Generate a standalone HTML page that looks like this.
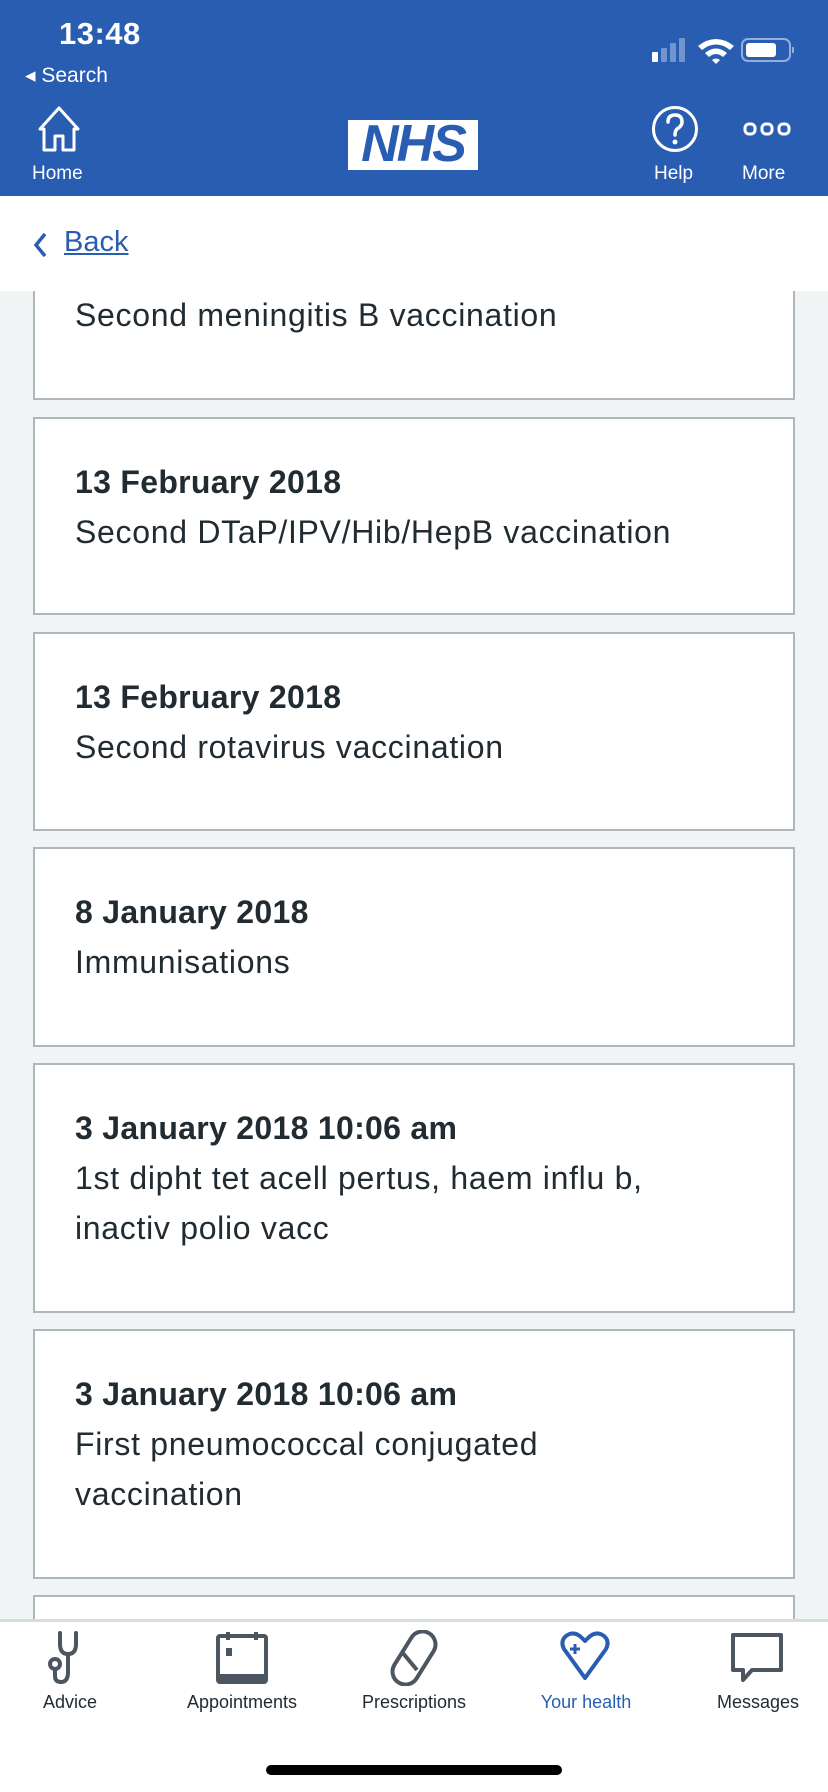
<!DOCTYPE html>
<html><head><meta charset="utf-8"><style>
*{margin:0;padding:0;box-sizing:border-box}
body{width:828px;height:1792px;position:relative;overflow:hidden;background:#f0f4f5;font-family:"Liberation Sans",sans-serif;color:#212b32}
.a{position:absolute}
.hdr{left:0;top:0;width:828px;height:196px;background:#285db2;color:#fff}
.card{position:absolute;left:33px;width:762px;background:#fff;border:2px solid #aeb7bd}
.card .t{position:absolute;left:40px;font-size:32px;line-height:50px;white-space:nowrap;letter-spacing:0.7px}
.card b{font-weight:bold;letter-spacing:0.3px}
.tab{position:absolute;top:1692px;font-size:18px;transform:translateX(-50%);white-space:nowrap;color:#212b32}
</style></head><body>
<div class="a hdr">
  <div class="a" style="left:59px;top:16px;font-size:31px;font-weight:bold;letter-spacing:0.5px">13:48</div>
  <div class="a" style="left:25px;top:63px;font-size:21px">◂ Search</div>
  <svg class="a" style="left:650px;top:36px" width="146" height="28" viewBox="0 0 146 28">
    <rect x="2" y="16" width="6" height="10" rx="1" fill="#fff"/>
    <rect x="11" y="12" width="6" height="14" rx="1" fill="#fff" opacity=".35"/>
    <rect x="20" y="7" width="6" height="19" rx="1" fill="#fff" opacity=".35"/>
    <rect x="29" y="2" width="6" height="24" rx="1" fill="#fff" opacity=".35"/>
    <path d="M48 10 Q66 -4 84 10 L80 14 Q66 3 52 14Z M55 17 Q66 8 77 17 L73 21 Q66 15 59 21Z M62 24 L66 28 L70 24 Q66 21 62 24Z" fill="#fff"/>
    <rect x="92" y="3" width="48" height="22" rx="6" fill="none" stroke="#fff" stroke-opacity=".5" stroke-width="2"/>
    <rect x="96" y="7" width="30" height="14" rx="3" fill="#fff"/>
    <path d="M143 11 v6" stroke="#fff" stroke-opacity=".5" stroke-width="2"/>
  </svg>
  <svg class="a" style="left:35px;top:105px" width="48" height="48" viewBox="0 0 48 48">
    <path d="M24 3 L43 24 L39 24 L39 45 L28 45 L28 31 L20 31 L20 45 L9 45 L9 24 L5 24 Z" fill="none" stroke="#fff" stroke-width="3" stroke-linejoin="round"/>
  </svg>
  <div class="a" style="left:32px;top:163px;font-size:19px">Home</div>
  <div class="a" style="left:348px;top:120px;width:130px;height:50px;background:#fff"></div>
  <div class="a" style="left:348px;top:114px;width:130px;text-align:center;font-size:52px;font-weight:bold;font-style:italic;color:#285db2;letter-spacing:-2px;line-height:60px">NHS</div>
  <svg class="a" style="left:651px;top:105px" width="48" height="48" viewBox="0 0 48 48">
    <circle cx="24" cy="24" r="21.5" fill="none" stroke="#fff" stroke-width="3"/>
    <path d="M17 17 Q17 10 24 10 Q31 10 31 17 Q31 21 26 24 Q24 26 24 30" fill="none" stroke="#fff" stroke-width="3.5" stroke-linecap="round"/>
    <circle cx="24" cy="37" r="2.5" fill="#fff"/>
  </svg>
  <div class="a" style="left:654px;top:163px;font-size:19px">Help</div>
  <svg class="a" style="left:743px;top:121px" width="48" height="16" viewBox="0 0 48 16">
    <rect x="2" y="3" width="10" height="10" rx="4" fill="none" stroke="#fff" stroke-width="3"/>
    <rect x="19" y="3" width="10" height="10" rx="4" fill="none" stroke="#fff" stroke-width="3"/>
    <rect x="36" y="3" width="10" height="10" rx="4" fill="none" stroke="#fff" stroke-width="3"/>
  </svg>
  <div class="a" style="left:742px;top:163px;font-size:19px">More</div>
</div>
<div class="a" style="left:0;top:196px;width:828px;height:95px;background:#fff"></div>
<svg class="a" style="left:31px;top:231px" width="18" height="28" viewBox="0 0 18 28"><path d="M14 3 L5 14 L14 25" fill="none" stroke="#285db2" stroke-width="3.5"/></svg>
<div class="a" style="left:64px;top:226px;font-size:29px;color:#285db2;text-decoration:underline">Back</div>

<div class="card" style="top:250px;height:150px;border-top:none;z-index:-1"><div class="t" style="top:40px">Second meningitis B vaccination</div></div>
<div class="card" style="top:417px;height:198px"><div class="t" style="top:38px"><b>13 February 2018</b><br>Second DTaP/IPV/Hib/HepB vaccination</div></div>
<div class="card" style="top:632px;height:199px"><div class="t" style="top:38px"><b>13 February 2018</b><br>Second rotavirus vaccination</div></div>
<div class="card" style="top:847px;height:200px"><div class="t" style="top:38px"><b>8 January 2018</b><br>Immunisations</div></div>
<div class="card" style="top:1063px;height:250px"><div class="t" style="top:38px"><b>3 January 2018 10:06 am</b><br>1st dipht tet acell pertus, haem influ b,<br>inactiv polio vacc</div></div>
<div class="card" style="top:1329px;height:250px"><div class="t" style="top:38px"><b>3 January 2018 10:06 am</b><br>First pneumococcal conjugated<br>vaccination</div></div>
<div class="card" style="top:1595px;height:60px"></div>

<div class="a" style="left:0;top:1619px;width:828px;height:173px;background:#fff;border-top:3px solid #d8dde0"></div>
<svg class="a" style="left:44px;top:1630px" width="52" height="56" viewBox="0 0 52 56" fill="none" stroke="#4c5660" stroke-width="4" stroke-linecap="round">
  <path d="M16 3 V14 Q16 24 24 24 Q32 24 32 14 V3"/><path d="M24 24 V42 Q24 52 17 52 Q11 52 11 46 V40"/><circle cx="11" cy="34" r="5"/>
</svg>
<svg class="a" style="left:215px;top:1630px" width="54" height="56" viewBox="0 0 54 56">
  <rect x="3" y="6" width="48" height="46" rx="2" fill="none" stroke="#4c5660" stroke-width="4"/>
  <rect x="3" y="44" width="48" height="8" fill="#4c5660"/><path d="M13 2 V10 M41 2 V10" stroke="#4c5660" stroke-width="4"/>
  <rect x="11" y="18" width="6" height="8" fill="#4c5660"/>
</svg>
<svg class="a" style="left:387px;top:1630px" width="54" height="56" viewBox="0 0 54 56" fill="none" stroke="#4c5660" stroke-width="4">
  <rect x="14" y="-1" width="26" height="58" rx="13" transform="rotate(32 27 28)"/><path d="M15 22 L30 40"/>
</svg>
<svg class="a" style="left:558px;top:1630px" width="54" height="56" viewBox="0 0 54 56" fill="none" stroke="#285db2" stroke-width="4" stroke-linejoin="round">
  <path d="M27 48 L6 19 Q2 11 8 6 Q16 0 24 8 L27 11 L30 8 Q38 0 46 6 Q52 11 48 19 Z"/><path d="M17 14 V24 M12 19 H22" stroke-width="3"/>
</svg>
<svg class="a" style="left:730px;top:1632px" width="54" height="54" viewBox="0 0 54 54" fill="none" stroke="#4c5660" stroke-width="4" stroke-linejoin="round">
  <path d="M3 3 H51 V38 H22 L13 48 V38 H3 Z"/>
</svg>
<div class="tab" style="left:70px">Advice</div>
<div class="tab" style="left:242px">Appointments</div>
<div class="tab" style="left:414px">Prescriptions</div>
<div class="tab" style="left:586px;color:#285db2">Your health</div>
<div class="tab" style="left:758px">Messages</div>
<div class="a" style="left:266px;top:1765px;width:296px;height:10px;border-radius:5px;background:#000"></div>
</body></html>
